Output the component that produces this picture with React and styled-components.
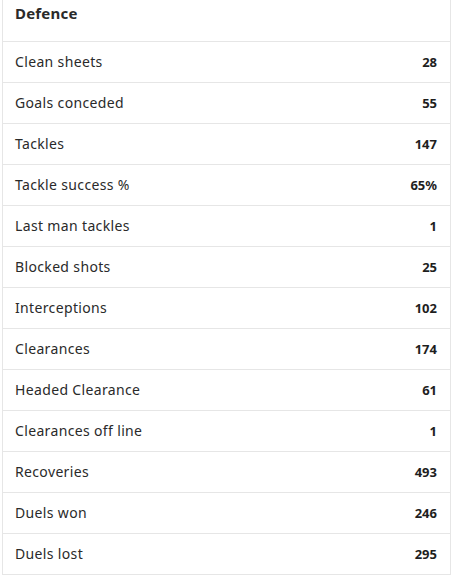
import React from "react";
import styled, { createGlobalStyle } from "styled-components";

const GlobalStyle = createGlobalStyle`
  body {
    margin: 0;
    background: #fff;
    font-family: "Noto Sans", "Lato", sans-serif;
    color: #2a2a2a;
  }
`;

const Card = styled.section`
  width: 447px;
  margin-left: 2px;
  border-left: 1px solid #e6e6e6;
  border-right: 1px solid #e6e6e6;
  background: #fff;
`;

const Title = styled.h3`
  margin: 0;
  height: 42px;
  padding: 0 12px 15px;
  display: flex;
  align-items: center;
  font-size: 15px;
  font-weight: 700;
  letter-spacing: 0.2px;
  box-sizing: border-box;
  border-bottom: 1px solid #e6e6e6;
`;

const Row = styled.div`
  height: 40px;
  padding: 0 13px 1px 12px;
  box-sizing: border-box;
  height: 41px;
  display: flex;
  align-items: center;
  justify-content: space-between;
  border-bottom: 1px solid #e6e6e6;
  font-size: 14px;
`;

const Label = styled.span`
  font-weight: 400;
  letter-spacing: 0.35px;
`;

const Value = styled.span`
  font-weight: 700;
  font-size: 13px;
  color: #1e1e1e;
`;

const stats = [
  ["Clean sheets", "28"],
  ["Goals conceded", "55"],
  ["Tackles", "147"],
  ["Tackle success %", "65%"],
  ["Last man tackles", "1"],
  ["Blocked shots", "25"],
  ["Interceptions", "102"],
  ["Clearances", "174"],
  ["Headed Clearance", "61"],
  ["Clearances off line", "1"],
  ["Recoveries", "493"],
  ["Duels won", "246"],
  ["Duels lost", "295"],
];

export default function App() {
  return (
    <>
      <GlobalStyle />
      <Card>
        <Title>Defence</Title>
        {stats.map(([label, value]) => (
          <Row key={label}>
            <Label>{label}</Label>
            <Value>{value}</Value>
          </Row>
        ))}
      </Card>
    </>
  );
}
